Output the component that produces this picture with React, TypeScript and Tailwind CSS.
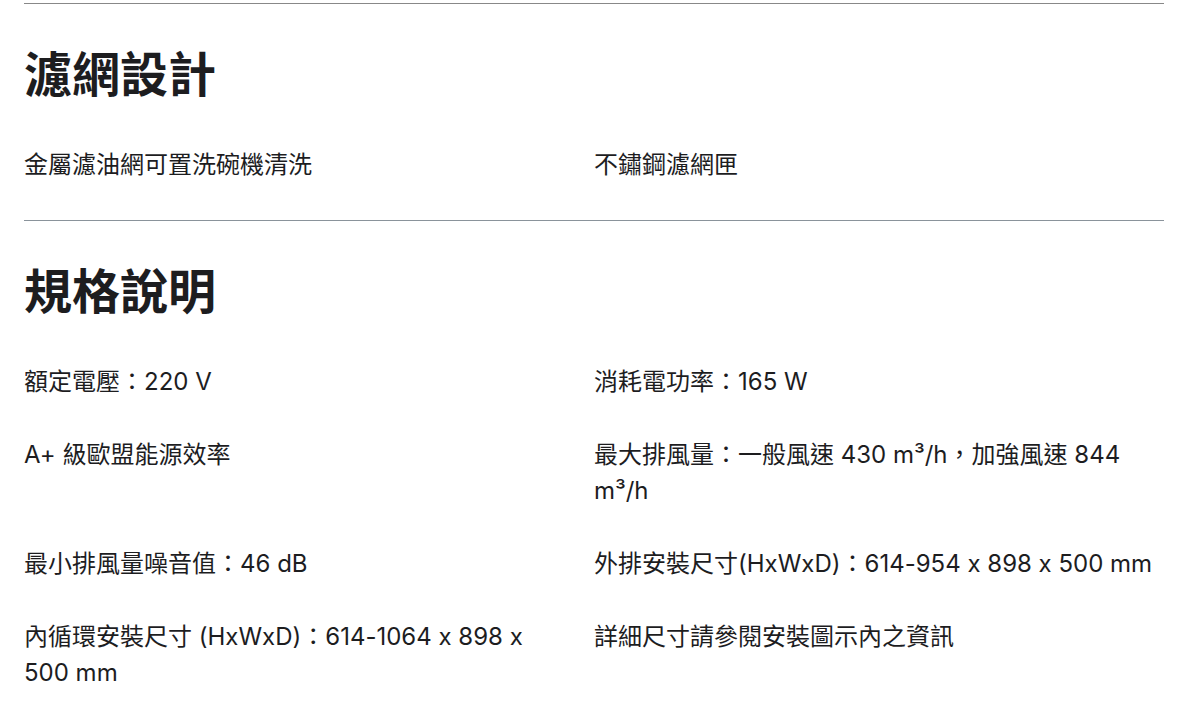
import React from "react";

const filterItems = ["金屬濾油網可置洗碗機清洗", "不鏽鋼濾網匣"];

const specItems = [
  "額定電壓：220 V",
  "消耗電功率：165 W",
  "A+ 級歐盟能源效率",
  "最大排風量：一般風速 430 m³/h，加強風速 844 m³/h",
  "最小排風量噪音值：46 dB",
  "外排安裝尺寸(HxWxD)：614-954 x 898 x 500 mm",
  "內循環安裝尺寸 (HxWxD)：614-1064 x 898 x 500 mm",
  "詳細尺寸請參閱安裝圖示內之資訊",
];

function Section({
  title,
  items,
  border,
}: {
  title: string;
  items: string[];
  border: string;
}) {
  return (
    <section className={`border-t ${border} pt-[42px] pb-[37px]`}>
      <h2 className="text-[48px] leading-[58px] font-bold text-[#1d1d1f]">
        {title}
      </h2>
      <div className="grid grid-cols-2 mt-[43px] gap-y-[37px]">
        {items.map((item) => (
          <p
            key={item}
            className="text-[24px] leading-[36px] text-[#1d1d1f] odd:pr-5"
          >
            {item}
          </p>
        ))}
      </div>
    </section>
  );
}

export default function App() {
  return (
    <div className="min-h-screen bg-white pl-6 pr-[26px] pt-[3px] font-['Inter','Noto_Sans_CJK_TC',sans-serif] [font-feature-settings:'calt'_0]">
      <Section title="濾網設計" items={filterItems} border="border-[#888888]" />
      <Section title="規格說明" items={specItems} border="border-[#8a939b]" />
    </div>
  );
}
